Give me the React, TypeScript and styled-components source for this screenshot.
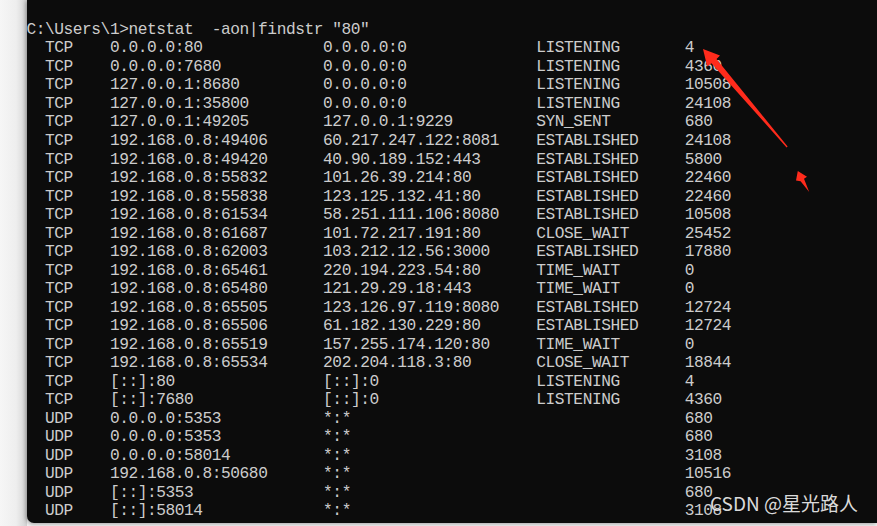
import React from "react";
import styled, { createGlobalStyle } from "styled-components";

const CH = 9.27;
const LINE = 18.52;

const Global = createGlobalStyle`
  html, body { margin: 0; padding: 0; background: #f4f4f4; }
  body { overflow: hidden; }
`;

const Page = styled.div`
  position: relative;
  width: 877px;
  height: 526px;
  display: flex;
  align-items: flex-start;
  background: #f4f4f4;
  overflow: hidden;
`;

const Gutter = styled.div`
  flex: 0 0 26.5px;
  height: 526px;
  background: linear-gradient(to right, #f6f6f6 0%, #eeeeee 60%, #d2d2d2 100%);
`;

const Console = styled.div`
  flex: 1;
  height: 523.3px;
  background: #0c0c0c;
  border-bottom-left-radius: 7px;
  box-shadow: -1px 1px 4px rgba(0, 0, 0, 0.35);
  padding-top: 20.9px;
  box-sizing: border-box;
  font-family: "Liberation Mono", "DejaVu Sans Mono", monospace;
  font-size: 16.2px;
  letter-spacing: -0.45px;
  line-height: ${LINE}px;
  color: #cccccc;
  white-space: pre;
  overflow: hidden;
`;

const Line = styled.div`
  height: ${LINE}px;
`;

const Row = styled.div`
  display: grid;
  grid-template-columns: ${2 * CH}px ${7 * CH}px ${23 * CH}px ${23 * CH}px ${16 * CH}px auto;
  height: ${LINE}px;
`;

const Cell = styled.span`
  overflow: visible;
`;

const Overlay = styled.svg`
  position: absolute;
  left: 0;
  top: 0;
  pointer-events: none;
`;

const Watermark = styled.div`
  position: absolute;
  left: 710px;
  top: 490px;
  font-family: "Noto Sans CJK SC", "Noto Sans", sans-serif;
  font-size: 19px;
  line-height: 26px;
  color: rgba(240, 240, 240, 0.92);
  white-space: nowrap;
`;

type Conn = [string, string, string, string, string];

const rows: Conn[] = [
  ["TCP", "0.0.0.0:80", "0.0.0.0:0", "LISTENING", "4"],
  ["TCP", "0.0.0.0:7680", "0.0.0.0:0", "LISTENING", "4360"],
  ["TCP", "127.0.0.1:8680", "0.0.0.0:0", "LISTENING", "10508"],
  ["TCP", "127.0.0.1:35800", "0.0.0.0:0", "LISTENING", "24108"],
  ["TCP", "127.0.0.1:49205", "127.0.0.1:9229", "SYN_SENT", "680"],
  ["TCP", "192.168.0.8:49406", "60.217.247.122:8081", "ESTABLISHED", "24108"],
  ["TCP", "192.168.0.8:49420", "40.90.189.152:443", "ESTABLISHED", "5800"],
  ["TCP", "192.168.0.8:55832", "101.26.39.214:80", "ESTABLISHED", "22460"],
  ["TCP", "192.168.0.8:55838", "123.125.132.41:80", "ESTABLISHED", "22460"],
  ["TCP", "192.168.0.8:61534", "58.251.111.106:8080", "ESTABLISHED", "10508"],
  ["TCP", "192.168.0.8:61687", "101.72.217.191:80", "CLOSE_WAIT", "25452"],
  ["TCP", "192.168.0.8:62003", "103.212.12.56:3000", "ESTABLISHED", "17880"],
  ["TCP", "192.168.0.8:65461", "220.194.223.54:80", "TIME_WAIT", "0"],
  ["TCP", "192.168.0.8:65480", "121.29.29.18:443", "TIME_WAIT", "0"],
  ["TCP", "192.168.0.8:65505", "123.126.97.119:8080", "ESTABLISHED", "12724"],
  ["TCP", "192.168.0.8:65506", "61.182.130.229:80", "ESTABLISHED", "12724"],
  ["TCP", "192.168.0.8:65519", "157.255.174.120:80", "TIME_WAIT", "0"],
  ["TCP", "192.168.0.8:65534", "202.204.118.3:80", "CLOSE_WAIT", "18844"],
  ["TCP", "[::]:80", "[::]:0", "LISTENING", "4"],
  ["TCP", "[::]:7680", "[::]:0", "LISTENING", "4360"],
  ["UDP", "0.0.0.0:5353", "*:*", "", "680"],
  ["UDP", "0.0.0.0:5353", "*:*", "", "680"],
  ["UDP", "0.0.0.0:58014", "*:*", "", "3108"],
  ["UDP", "192.168.0.8:50680", "*:*", "", "10516"],
  ["UDP", "[::]:5353", "*:*", "", "680"],
  ["UDP", "[::]:58014", "*:*", "", "3108"],
];

const RED = "#ff2b1c";

export default function App() {
  return (
    <>
      <Global />
      <Page>
        <Gutter />
        <Console>
          <Line>{'C:\\Users\\1>netstat  -aon|findstr "80"'}</Line>
          {rows.map((r, i) => (
            <Row key={i}>
              <Cell />
              <Cell>{r[0]}</Cell>
              <Cell>{r[1]}</Cell>
              <Cell>{r[2]}</Cell>
              <Cell>{r[3]}</Cell>
              <Cell>{r[4]}</Cell>
            </Row>
          ))}
        </Console>
        <Overlay width="877" height="526" viewBox="0 0 877 526">
          <polygon
            fill={RED}
            points="703,49 720,55.5 716.5,59 787.6,146.6 786.6,147.4 711.4,63.2 707.2,66.5"
          />
          <polygon
            fill={RED}
            points="797.8,171 807,176.8 804,178.8 809.2,192 800.6,181.2 796,180.4"
          />
        </Overlay>
        <Watermark>CSDN @星光路人</Watermark>
      </Page>
    </>
  );
}
